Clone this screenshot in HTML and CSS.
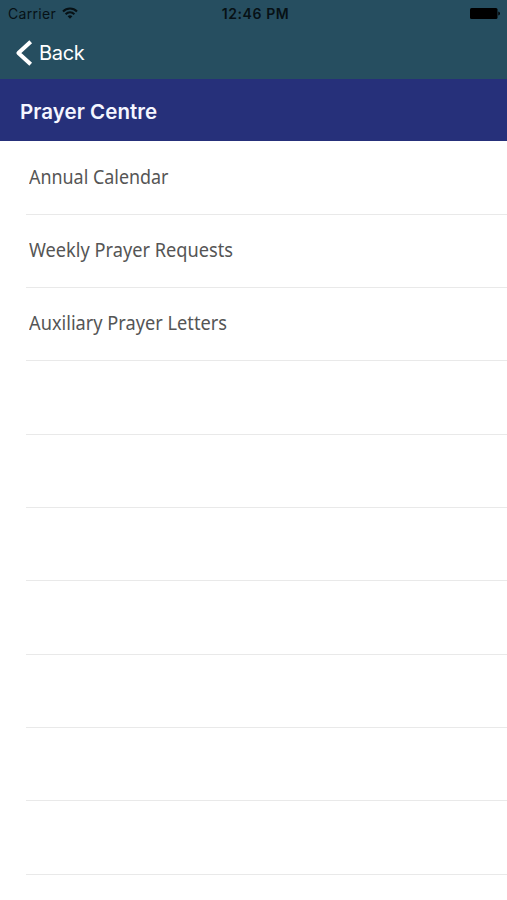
FILE: index.html
```html
<!DOCTYPE html>
<html lang="en">
<head>
<meta charset="utf-8">
<title>Prayer Centre</title>
<link rel="stylesheet" href="styles.css">
</head>
<body>
<header class="top">
  <div class="status">
    <div class="carrier"><span>Carrier</span>
      <svg class="wifi" width="16" height="12" viewBox="0 0 16 12" fill="none" stroke="#071115" stroke-width="2.1"><path d="M1 4.400C5 .5 11 .5 15 4.400M3.600 7.200C6.200 4.800 9.800 4.800 12.400 7.200"/><path d="M8 11.700 5.600 9.300Q8 7.300 10.400 9.300Z" fill="#071115" stroke="none"/></svg>
    </div>
    <span class="time">12:46 PM</span>
    <svg class="battery" width="30" height="13" viewBox="0 0 30 13"><rect x="0" y="1" width="27.500" height="11" rx="1.500"/><path d="M28.300 4.500Q30 5 30 6.500T28.300 8.500Z"/></svg>
  </div>
  <nav class="nav">
    <svg width="18" height="26" viewBox="0 0 18 26" fill="none" stroke="#fff" stroke-width="4" stroke-linejoin="round"><path d="M15.700 1.800 3.400 13 15.700 24.200"/></svg>
    <span class="back">Back</span>
  </nav>
</header>
<h1 class="title"><span>Prayer Centre</span></h1>
<ul class="list">
  <li><span class="narrow">Annual Calendar</span></li>
  <li><span>Weekly Prayer Requests</span></li>
  <li><span>Auxiliary Prayer Letters</span></li>
  <li></li><li></li><li></li><li></li><li></li><li></li><li></li>
</ul>
</body>
</html>
```
FILE: styles.css
```css
* { box-sizing: border-box; }
body { margin: 0; height: 900px; overflow: hidden; background: #fff; font-family: Inter, sans-serif; }
.top { height: 79px; background: #264e60; }
.status { height: 27px; display: grid; grid-template-columns: 1fr auto 1fr; align-items: center; padding: 0 7px 0 8px; color: #071115; font-size: 14px; line-height: 27px; }
.carrier { display: flex; align-items: center; gap: 6px; letter-spacing: .3px; }
.wifi { margin-top: -1px; }
.time { padding-left: 3px; font-weight: 600; font-size: 14px; letter-spacing: .6px; }
.battery { justify-self: end; fill: #000; }
.nav { height: 52px; display: flex; align-items: center; padding-left: 15px; gap: 6px; color: #fff; font-size: 20px; letter-spacing: -.3px; }
.title { margin: 0; height: 62px; display: flex; align-items: center; padding: 2px 0 0 20px; background: #26307a; color: #f5f6ff; font-size: 20.5px; font-weight: 600; letter-spacing: .05px; }
.list { margin: 0 0 0 26px; padding: .5px 0 0; list-style: none; }
.list li { height: 73.33px; display: flex; align-items: center; padding: 0 0 4px 3px; border-bottom: 1px solid #e9e9e9; color: #555; font: 20.5px "Noto Sans", sans-serif; }
.list span { transform: scaleX(.888); transform-origin: left; }
.list .narrow { transform: scaleX(.873); }
```
